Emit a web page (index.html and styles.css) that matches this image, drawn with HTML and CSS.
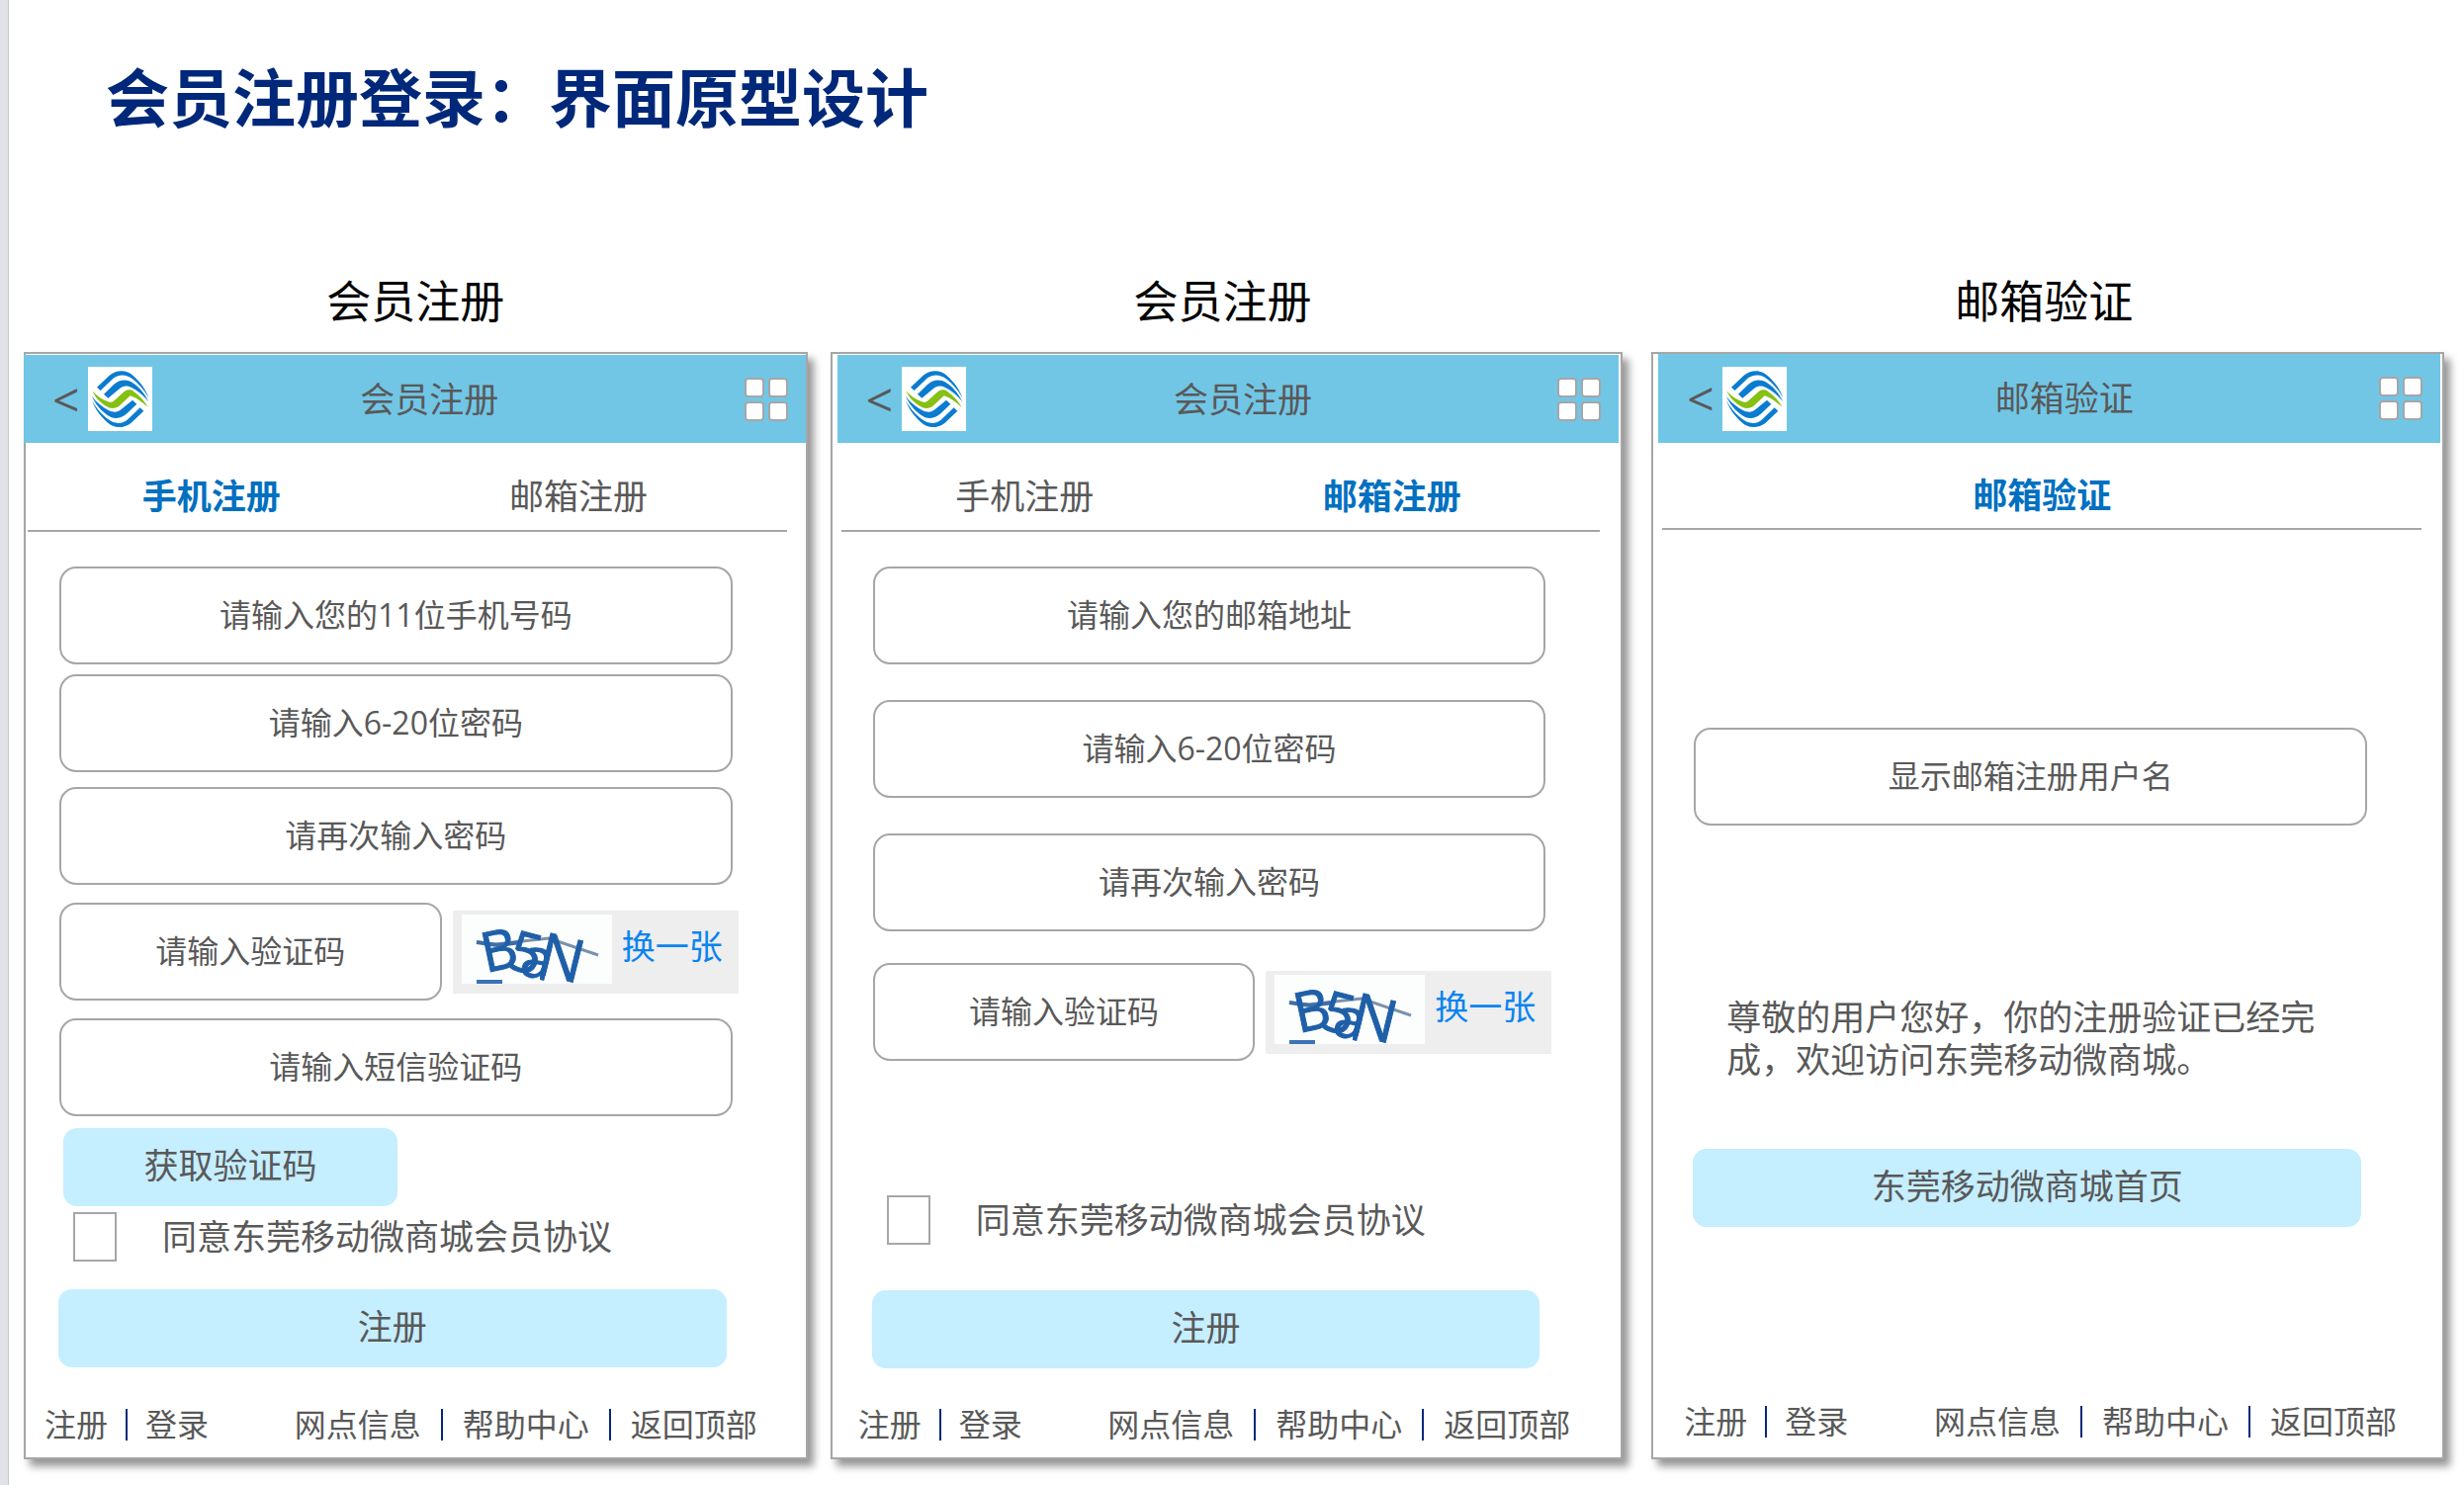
FILE: index.html
```html
<!DOCTYPE html>
<html lang="zh-CN">
<head>
<meta charset="utf-8">
<title>会员注册登录：界面原型设计</title>
<link rel="stylesheet" href="styles.css">
</head>
<body>
<svg class="defs" aria-hidden="true">
  <symbol id="logo" viewBox="0 0 195 195">
    <g fill="#0a7cd0">
      <path id="swoosh-outer" d="M27 62 L65 26 C88 8 118 8 138 28 C160 48 176 70 184 94 C170 68 152 50 134 36 C116 22 94 22 78 34 L38 72 Z"/>
      <path id="swoosh-inner" d="M48 83 L78 54 C98 36 120 37 138 50 C158 64 174 84 184 106 C168 86 150 72 132 63 C116 56 106 58 96 66 L61 95 Z"/>
      <use href="#swoosh-outer" transform="rotate(180 98 98)"/>
      <use href="#swoosh-inner" transform="rotate(180 98 98)"/>
    </g>
    <path fill="#86c014" d="M13 73 C30 92 48 102 66 107 C72 108 76 106 80 102 L110 75 C118 68 130 68 138 74 C158 88 172 104 182 123 C166 108 150 96 134 90 L128 88 L96 118 C84 128 68 128 56 120 C36 108 22 94 13 73 Z"/>
  </symbol>
  <symbol id="tiles" viewBox="0 0 44 44">
    <g fill="#fff" stroke="#a6a6a6" stroke-width="2">
      <rect x="1" y="1" width="18" height="18" rx="3"/>
      <rect x="25" y="1" width="18" height="18" rx="3"/>
      <rect x="1" y="25" width="18" height="18" rx="3"/>
      <rect x="25" y="25" width="18" height="18" rx="3"/>
    </g>
  </symbol>
  <symbol id="captcha" viewBox="0 0 152 70">
    <rect width="152" height="70" fill="#fcfefe"/>
    <path d="M15 28 L34 30 L88 24 L138 41" fill="none" stroke="#7b92ab" stroke-width="3"/>
    <path d="M15 28 L36 31 L60 28" fill="none" stroke="#3f6ea6" stroke-width="4"/>
    <text class="captcha-text" x="24 45 57" y="59 54 60" rotate="-12 14 14">B5a</text>
    <text class="captcha-text captcha-text-large" x="74" y="59" rotate="14">N</text>
    <path d="M15 68 H41" stroke="#3b73b4" stroke-width="4"/>
  </symbol>
</svg>

<div class="page">
  <div class="rail"></div>
  <main class="slide">
    <h1 class="slide-title">会员注册登录：界面原型设计</h1>
    <div class="boards">

      <section class="board board-first">
        <h2 class="caption">会员注册</h2>
        <div class="screen">
          <header class="bar">
            <button class="back" type="button" aria-label="返回">&lt;</button>
            <svg class="logo" role="img" aria-label="中国移动"><use href="#logo"/></svg>
            <h3 class="bar-title">会员注册</h3>
            <button class="menu" type="button" aria-label="菜单"><svg><use href="#tiles"/></svg></button>
          </header>
          <nav class="tabs">
            <a class="tab active" href="#phone">手机注册</a>
            <a class="tab" href="#email">邮箱注册</a>
          </nav>
          <form class="form">
            <input class="field" type="tel" aria-label="手机号码" placeholder="请输入您的11位手机号码">
            <input class="field space-s" type="password" aria-label="密码" placeholder="请输入6-20位密码">
            <input class="field space-m" type="password" aria-label="确认密码" placeholder="请再次输入密码">
            <div class="captcha-row space-l">
              <input class="field" type="text" aria-label="验证码" placeholder="请输入验证码">
              <div class="captcha">
                <svg class="captcha-image"><use href="#captcha"/></svg>
                <a class="captcha-swap" href="#swap">换一张</a>
              </div>
            </div>
            <input class="field space-l" type="text" aria-label="短信验证码" placeholder="请输入短信验证码">
            <button class="button button-code" type="button">获取验证码</button>
            <div class="agree agree-tight">
              <input class="check" type="checkbox" id="agree-phone">
              <label for="agree-phone">同意东莞移动微商城会员协议</label>
            </div>
            <button class="button space-xl" type="button">注册</button>
          </form>
          <footer class="foot">
            <div class="foot-group foot-account"><a href="#reg">注册</a><i class="sep"></i><a href="#login">登录</a></div>
            <div class="foot-group"><a href="#shops">网点信息</a><i class="sep"></i><a href="#help">帮助中心</a><i class="sep"></i><a href="#top">返回顶部</a></div>
          </footer>
        </div>
      </section>

      <section class="board">
        <h2 class="caption">会员注册</h2>
        <div class="screen">
          <header class="bar">
            <button class="back" type="button" aria-label="返回">&lt;</button>
            <svg class="logo" role="img" aria-label="中国移动"><use href="#logo"/></svg>
            <h3 class="bar-title">会员注册</h3>
            <button class="menu" type="button" aria-label="菜单"><svg><use href="#tiles"/></svg></button>
          </header>
          <nav class="tabs">
            <a class="tab" href="#phone">手机注册</a>
            <a class="tab active" href="#email">邮箱注册</a>
          </nav>
          <form class="form">
            <input class="field" type="email" aria-label="邮箱地址" placeholder="请输入您的邮箱地址">
            <input class="field space-xxl" type="password" aria-label="密码" placeholder="请输入6-20位密码">
            <input class="field space-xxl" type="password" aria-label="确认密码" placeholder="请再次输入密码">
            <div class="captcha-row space-xl">
              <input class="field" type="text" aria-label="验证码" placeholder="请输入验证码">
              <div class="captcha">
                <svg class="captcha-image"><use href="#captcha"/></svg>
                <a class="captcha-swap" href="#swap">换一张</a>
              </div>
            </div>
            <div class="agree agree-loose">
              <input class="check" type="checkbox" id="agree-email">
              <label for="agree-email">同意东莞移动微商城会员协议</label>
            </div>
            <button class="button" type="button">注册</button>
          </form>
          <footer class="foot">
            <div class="foot-group foot-account"><a href="#reg">注册</a><i class="sep"></i><a href="#login">登录</a></div>
            <div class="foot-group"><a href="#shops">网点信息</a><i class="sep"></i><a href="#help">帮助中心</a><i class="sep"></i><a href="#top">返回顶部</a></div>
          </footer>
        </div>
      </section>

      <section class="board board-verify">
        <h2 class="caption">邮箱验证</h2>
        <div class="screen">
          <header class="bar">
            <button class="back" type="button" aria-label="返回">&lt;</button>
            <svg class="logo" role="img" aria-label="中国移动"><use href="#logo"/></svg>
            <h3 class="bar-title">邮箱验证</h3>
            <button class="menu" type="button" aria-label="菜单"><svg><use href="#tiles"/></svg></button>
          </header>
          <nav class="tabs">
            <a class="tab active" href="#verify">邮箱验证</a>
          </nav>
          <form class="form">
            <input class="field" type="text" aria-label="用户名" placeholder="显示邮箱注册用户名" readonly>
            <p class="message">尊敬的用户您好，你的注册验证已经完成，欢迎访问东莞移动微商城。</p>
            <button class="button" type="button">东莞移动微商城首页</button>
          </form>
          <footer class="foot">
            <div class="foot-group foot-account"><a href="#reg">注册</a><i class="sep"></i><a href="#login">登录</a></div>
            <div class="foot-group"><a href="#shops">网点信息</a><i class="sep"></i><a href="#help">帮助中心</a><i class="sep"></i><a href="#top">返回顶部</a></div>
          </footer>
        </div>
      </section>

    </div>
  </main>
</div>
</body>
</html>
```

FILE: styles.css
```css
* {
  box-sizing: border-box;
}

body {
  margin: 0;
  background: #fff;
  color: #595959;
  font-family: "Open Sans", "Noto Sans CJK SC", sans-serif;
}

h1, h2, h3, p {
  margin: 0;
}

a {
  color: inherit;
  text-decoration: none;
}

button, input {
  font-family: inherit;
  color: inherit;
}

.defs {
  display: none;
}

.page {
  display: flex;
  min-height: 100vh;
}

.rail {
  flex: none;
  width: 9px;
  background: #e1e2e9;
  border-right: 1px solid #c6c7cc;
}

.slide {
  flex: 1;
  padding: 59px 20px 24px 15px;
}

.slide-title {
  padding-left: 83px;
  font-size: 64px;
  line-height: 80px;
  color: #00287a;
}

.boards {
  display: flex;
  gap: 23px;
  margin-top: 136px;
}

.board {
  display: flex;
  flex-direction: column;
  flex: 802 1 0;
}

.board-first {
  flex-grow: 793;
}

.board-verify {
  margin-left: 6px;
}

.caption {
  padding-right: 8px;
  margin-bottom: 21px;
  font-size: 45px;
  font-weight: 400;
  line-height: 60px;
  text-align: center;
  color: #000;
}

.board-first .caption {
  padding-right: 0;
}

.screen {
  display: flex;
  flex-direction: column;
  flex: 1;
  padding: 1px 2px 0 5px;
  border: 2px solid #a6a6a6;
  box-shadow: 6px 7px 8px rgba(0, 0, 0, 0.42);
}

.board-first .screen {
  padding: 1px 0 0 0;
}

.board-first .screen > * {
  margin-left: -2px;
}

.board-verify .screen {
  padding-top: 0;
}

.bar {
  display: flex;
  align-items: center;
  height: 89px;
  padding: 0 18px 0 29px;
  background: #71c6e6;
}

.board-verify .bar {
  height: 90px;
}

.back {
  width: 36px;
  padding: 0;
  border: 0;
  background: none;
  font-size: 48px;
  line-height: 60px;
  text-align: left;
}

.logo {
  width: 65px;
  height: 65px;
  background: #fff;
}

.bar-title {
  flex: 1;
  padding-right: 38px;
  font-size: 35px;
  font-weight: 400;
  line-height: 60px;
  text-align: center;
}

.menu {
  display: flex;
  padding: 0;
  border: 0;
  background: none;
}

.menu svg {
  width: 44px;
  height: 44px;
}

.tabs {
  display: flex;
  margin: 0 19px 0 4px;
  padding: 20px 25px 0 0;
  border-bottom: 2px solid #a6a6a6;
  font-size: 35px;
  line-height: 68px;
  text-align: center;
}

.board-first .screen > .tabs {
  margin-left: 2px;
}

.board-verify .tabs {
  padding: 20px 0 0;
  line-height: 66px;
}

.tab {
  flex: 1;
}

.tab.active {
  font-weight: 700;
  color: #0070c0;
}

.form {
  display: flex;
  flex-direction: column;
  padding: 35px 74px 0 36px;
}

.board-verify .form {
  padding-top: 200px;
}

.field {
  width: 100%;
  height: 99px;
  padding: 0 16px 2px;
  border: 2px solid #a6a6a6;
  border-radius: 17px;
  background: #fff;
  font-size: 32px;
  text-align: center;
}

.field::placeholder {
  color: #595959;
  opacity: 1;
}

.space-s {
  margin-top: 10px;
}

.space-m {
  margin-top: 15px;
}

.space-l {
  margin-top: 18px;
}

.space-xl {
  margin-top: 32px;
}

.space-xxl {
  margin-top: 36px;
}

.captcha-row {
  display: flex;
  align-items: center;
  gap: 11px;
  margin-right: -6px;
}

.captcha-row .field {
  flex: 1;
  min-width: 0;
}

.captcha {
  display: flex;
  flex: none;
  gap: 10px;
  width: 289px;
  height: 84px;
  padding: 4px 9px;
  background: #eee;
}

.captcha-image {
  width: 152px;
  height: 70px;
}

.captcha-text {
  font-size: 56px;
  fill: #1f5fa8;
  stroke: #1f5fa8;
  stroke-width: 1px;
}

.captcha-text-large {
  font-size: 60px;
}

.captcha-swap {
  font-size: 34px;
  line-height: 64px;
  color: #0a84f0;
}

.button {
  height: 79px;
  margin-right: 6px;
  margin-left: -1px;
  padding: 0 0 8px;
  border: 0;
  border-radius: 14px;
  background: #c5eeff;
  font-size: 35px;
}

.button-code {
  width: 338px;
  margin: 12px 0 0 4px;
}

.agree {
  display: flex;
  align-items: center;
  gap: 46px;
  padding-left: 14px;
  font-size: 35px;
  line-height: 50px;
}

.agree-tight {
  margin-top: 6px;
}

.agree-loose {
  margin: 136px 0 46px;
}

.check {
  appearance: none;
  width: 44px;
  height: 50px;
  margin: 0;
  border: 2px solid #a6a6a6;
  background: #fff;
}

.agree-tight + .button {
  margin-top: 28px;
}

.message {
  padding: 172px 34px 69px 33px;
  font-size: 35px;
  line-height: 43px;
}

.foot {
  display: flex;
  justify-content: space-between;
  margin-top: auto;
  padding: 36px 49px 12px 21px;
  font-size: 32px;
  line-height: 42px;
}

.board-verify .foot {
  padding: 36px 44px 15px 26px;
}

.foot-group {
  display: flex;
  align-items: center;
  gap: 20px;
}

.foot-account {
  gap: 18px;
}

.sep {
  width: 2px;
  height: 32px;
  background: #00287a;
}
```
